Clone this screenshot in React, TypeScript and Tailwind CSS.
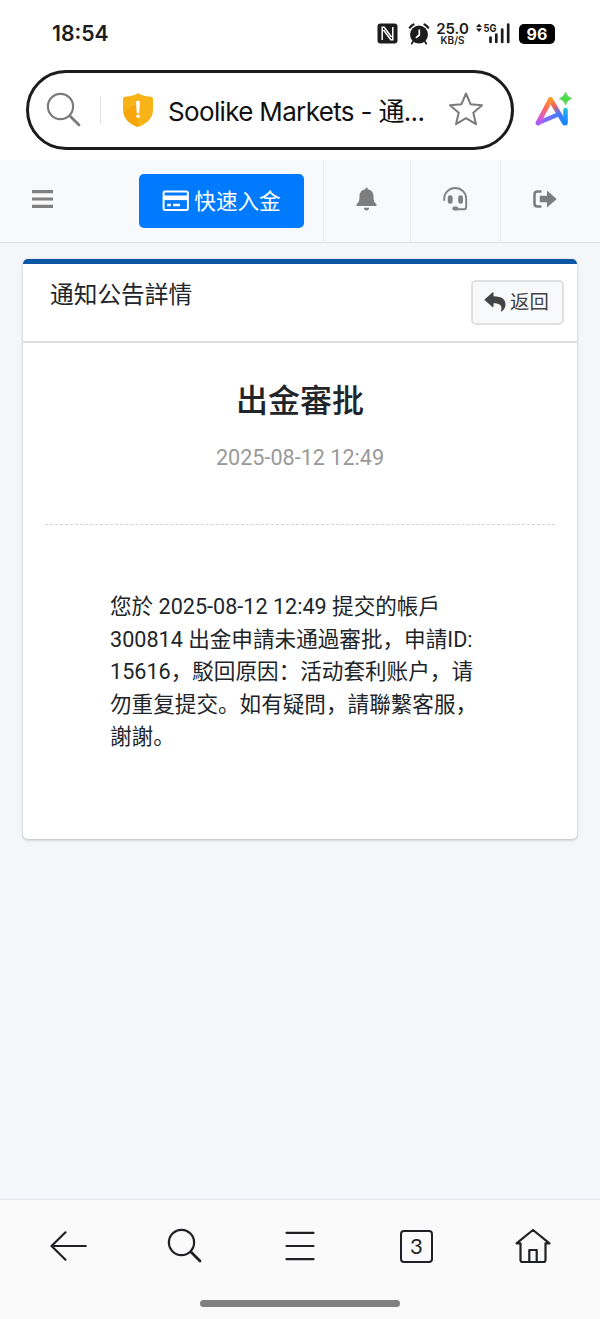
import React from "react";

const ink = "#202124";

const NfcIcon = () => (
  <svg width="21" height="21" viewBox="0 0 21 21">
    <rect x="0.5" y="0.5" width="20" height="20" rx="3" fill="#1c1c1c" />
    <path d="M5.2 17V4.2L7.200 4.200L14.500 14M15.800 4V16.8L13.800 16.800L6.500 7" fill="none" stroke="#fff" strokeWidth="1.5" />
  </svg>
);

const AlarmIcon = () => (
  <svg width="22" height="22" viewBox="0 0 22 22">
    <circle cx="11" cy="11.6" r="9" fill="#1c1c1c" />
    <path d="M1.8 4.600A9 9 0 0 1 5.500 1.4M20.2 4.600A9 9 0 0 0 16.500 1.4" stroke="#1c1c1c" strokeWidth="2.2" strokeLinecap="round" fill="none" />
    <path d="M5 18.5L3.8 20.600M17 18.5l1.2 2.1" stroke="#1c1c1c" strokeWidth="1.8" strokeLinecap="round" />
    <path d="M11.3 7v5L8.4 14.4" stroke="#fff" strokeWidth="1.7" fill="none" strokeLinecap="round" />
  </svg>
);

const SignalIcon = () => (
  <svg width="36" height="24" viewBox="0 0 36 24" className="overflow-visible">
    <path d="M0 4.100L3 0.800L6 4.100zM0 5.600L3 8.900L6 5.600z" fill="#1c1c1c" />
    <text x="7.5" y="8.6" fontSize="10.8" fontWeight="700" fontFamily="Inter, sans-serif" fill="#1c1c1c" textLength="13" lengthAdjust="spacingAndGlyphs">5G</text>
    <path d="M14.5 14.500V19M20.3 11.500V19M26.2 6.5V19M32.2 1.5V19" stroke="#1c1c1c" strokeWidth="2.7" strokeLinecap="round" />
  </svg>
);

const SearchIcon = ({ color, width = 2.2 }: { color: string; width?: number }) => (
  <svg width="36" height="36" viewBox="0 0 36 36" fill="none" stroke={color} strokeLinecap="round">
    <circle cx="14.5" cy="14.5" r="12.6" strokeWidth={width} />
    <path d="M24 24L33 33" strokeWidth={width + 0.6} />
  </svg>
);

const ShieldIcon = () => (
  <svg width="32" height="36" viewBox="0 0 32 36">
    <path d="M16 1C18.5 3.3 24 4.2 29 4.7Q31 5 31 7V17.5C31 27 23.5 32.5 16 35C8.500 32.500 1 27 1 17.500V7Q1 5 3 4.700C8 4.200 13.500 3.300 16 1Z" fill="#f7b318" />
    <path d="M16 13C10 13 5 16 1.500 21C3 28 8.500 32.500 16 35Z" fill="#f5a70d" />
    <path d="M14 10Q14 8.800 16 8.800T18 10L17.300 20.500Q17.200 21.500 16 21.500T14.700 20.500Z" fill="#fff" />
    <circle cx="16" cy="24.3" r="1.8" fill="#fff" />
  </svg>
);

const StarIcon = () => (
  <svg width="34" height="34" viewBox="0 0 34 34">
    <path d="M17 1.500L21.500 12.200L33 13.200L24.300 20.800L27 32.200L17 26.200L7 32.200L9.700 20.800L1 13.200L12.500 12.200Z" fill="none" stroke="#7b7b7b" strokeWidth="2" strokeLinejoin="round" />
  </svg>
);

const AiLogo = () => (
  <svg width="38" height="38" viewBox="0 0 38 38" fill="none">
    <defs>
      <linearGradient id="leg" x1="17" y1="6" x2="3" y2="33" gradientUnits="userSpaceOnUse">
        <stop offset="0" stopColor="#ffa51e" />
        <stop offset="0.4" stopColor="#ff6b5a" />
        <stop offset="0.75" stopColor="#d95bd0" />
        <stop offset="1" stopColor="#a45cff" />
      </linearGradient>
      <linearGradient id="bar" x1="3" y1="33" x2="31" y2="26" gradientUnits="userSpaceOnUse">
        <stop offset="0" stopColor="#b45cfa" />
        <stop offset="0.5" stopColor="#6d70ff" />
        <stop offset="1" stopColor="#168cff" />
      </linearGradient>
      <linearGradient id="side" x1="17" y1="7" x2="31" y2="32" gradientUnits="userSpaceOnUse">
        <stop offset="0" stopColor="#ff9f1f" />
        <stop offset="0.3" stopColor="#f0605d" />
        <stop offset="0.6" stopColor="#4a78ff" />
        <stop offset="1" stopColor="#168cff" />
      </linearGradient>
      <linearGradient id="stem" x1="31" y1="16" x2="31" y2="33" gradientUnits="userSpaceOnUse">
        <stop offset="0" stopColor="#25c9c4" />
        <stop offset="0.5" stopColor="#159fff" />
        <stop offset="1" stopColor="#197fff" />
      </linearGradient>
    </defs>
    <path d="M4 32L24 23.500" stroke="url(#bar)" strokeWidth="4.500" strokeLinecap="round" />
    <path d="M16.500 8.500L30.500 32" stroke="url(#side)" strokeWidth="4.800" strokeLinecap="round" />
    <path d="M16.500 8.500L4 32" stroke="url(#leg)" strokeWidth="4.800" strokeLinecap="round" />
    <path d="M31.500 19V32" stroke="url(#stem)" strokeWidth="4.600" strokeLinecap="round" />
    <path d="M31.500 1Q33 6 37.800 7.500Q33 9 31.500 14Q30 9 25.200 7.500Q30 6 31.500 1Z" fill="#4ed84a" stroke="#4ed84a" strokeWidth="0.500" strokeLinejoin="round" />
  </svg>
);

const BurgerIcon = () => (
  <svg width="21" height="18" viewBox="0 0 21 18">
    <path d="M0 1.600H21M0 9H21M0 16.400H21" stroke="#808080" strokeWidth="3.100" />
  </svg>
);

const CardIcon = () => (
  <svg width="27" height="22" viewBox="0 0 27 22">
    <rect x="1.600" y="1.600" width="24.300" height="18.500" rx="1.500" fill="none" stroke="#fff" strokeWidth="2" />
    <path d="M1.500 7.800H26" stroke="#fff" strokeWidth="4.600" />
    <path d="M5 15H9M11 15H18" stroke="#fff" strokeWidth="2.300" />
  </svg>
);

const BellIcon = () => (
  <svg width="21" height="24" viewBox="0 0 21 24" fill="#7d7d7d">
    <path d="M9.200 2.200Q9.200 0.500 10.500 0.500T11.800 2.200C16 3 17.500 6 17.500 9.500C17.500 14 18.500 15.500 20.300 17Q21.300 19 19.500 19H1.500Q-0.300 19 0.700 17C2.500 15.500 3.500 14 3.500 9.500C3.500 6 5 3 9.200 2.200Z" />
    <path d="M7.700 20.700H13.300Q12.700 23.600 10.500 23.600T7.700 20.700Z" />
  </svg>
);

const HeadsetIcon = () => (
  <svg width="25" height="24" viewBox="0 0 25 24">
    <path d="M1.200 13V11.500A11 10.500 0 0 1 23.200 11.500V20Q23.200 22.300 20.800 22.300H13" fill="none" stroke="#808080" strokeWidth="1.900" strokeLinecap="round" />
    <rect x="4.800" y="8.300" width="4.800" height="8.400" rx="2.300" fill="#808080" />
    <rect x="15.200" y="8.300" width="4.800" height="8.400" rx="2.300" fill="#808080" />
    <rect x="9.300" y="19.500" width="6" height="4" rx="2" fill="#808080" />
  </svg>
);

const ExitIcon = () => (
  <svg width="24" height="18" viewBox="0 0 24 18">
    <path d="M8.500 1.500H4.500Q1.500 1.500 1.500 4.500V13.500Q1.500 16.500 4.500 16.500H8.500" fill="none" stroke="#7d7d7d" strokeWidth="2.600" />
    <path d="M6.800 5.700H14V0.500L23.700 9L14 17.500V12.300H6.800Z" fill="#7d7d7d" />
  </svg>
);

const ReplyIcon = () => (
  <svg width="22" height="20" viewBox="0 0 22 20">
    <path d="M0.300 7.700L8.700 0.300Q9.500 0 9.500 1V4.300C18 4.500 21.500 7.500 21.500 12.500C21.500 15.500 20 18 17.500 19.500Q16.700 19.700 17 18.800C18.500 13 16 11.300 9.500 11.200V14.500Q9.500 15.500 8.700 15.200Z" fill="#444" />
  </svg>
);

const iconCell = "flex items-center justify-center border-l border-[#e9ecef]";

export default function App() {
  return (
    <div className="flex h-[1319px] w-[600px] flex-col overflow-hidden bg-[#f4f6f9] font-['Roboto','Noto_Sans_CJK_SC',sans-serif] text-[#212529]">
      <header className="h-[160px] shrink-0 bg-white">
        <div className="flex h-[70px] items-start pl-[52px] pt-[20px]">
          <span className="w-[325px] font-['Inter',sans-serif] text-[21.2px] font-semibold leading-[26px] text-[#1c1c1c]">18:54</span>
          <div className="flex pt-[3px]">
            <NfcIcon />
            <div className="ml-[10px]"><AlarmIcon /></div>
            <div className="ml-[6px] flex w-[33px] flex-col items-center whitespace-nowrap font-['Inter',sans-serif] font-semibold text-[#1c1c1c]">
              <span className="text-[15px] leading-[11px]">25.0</span>
              <span className="text-[10px] leading-[12px]">KB/S</span>
            </div>
            <div className="ml-[7px]"><SignalIcon /></div>
            <div className="ml-[7px] mt-px flex h-[20px] w-[36px] items-center justify-center rounded-[5px] bg-black font-['Inter',sans-serif] text-[16px] font-bold leading-none text-white">96</div>
          </div>
        </div>
        <div className="flex items-center">
          <div className="ml-[26px] flex h-[80px] w-[488px] items-center rounded-full border-[3px] border-[#1c1c1c] pl-[17px]">
            <SearchIcon color="#7b7b7b" />
            <div className="ml-[18px] h-[27px] w-px bg-[#dedede]" />
            <div className="ml-[21px]"><ShieldIcon /></div>
            <span className="ml-[14px] w-[260px] whitespace-nowrap pt-[3px] font-['Inter','Noto_Sans_CJK_SC',sans-serif] text-[26px] leading-[36px] tracking-[-0.66px] text-[#111]">Soolike Markets - 通...</span>
            <div className="ml-[21px] shrink-0 pb-[3px]"><StarIcon /></div>
          </div>
          <div className="ml-[20px]"><AiLogo /></div>
        </div>
      </header>

      <nav className="flex h-[83px] shrink-0 border-b border-[#dee2e6] bg-[#f8f9fa]">
        <div className="flex w-[139px] items-center pb-[5px] pl-[32px]"><BurgerIcon /></div>
        <button className="mt-[14px] flex h-[54px] w-[165px] items-center justify-center gap-[5px] rounded-[5px] bg-[#007bff] text-[21.6px] text-white">
          <CardIcon />
          <span className="pt-[3px]">快速入金</span>
        </button>
        <div className={`${iconCell} ml-[19px] w-[87px] pb-[5px] pr-[2px]`}><BellIcon /></div>
        <div className={`${iconCell} w-[90px] pb-[5px]`}><HeadsetIcon /></div>
        <div className={`${iconCell} w-[100px] pb-[5px] pr-[12px]`}><ExitIcon /></div>
      </nav>

      <main className="flex-1 px-[23px] pt-[16px]">
        <section className="h-[580px] rounded-[5px] border-t-[5px] border-[#0d56a6] bg-white shadow-[0_1px_3px_rgba(0,0,0,0.25)]">
          <div className="flex h-[79px] items-start justify-between border-b-2 border-[#dfdfdf] pl-[27px] pr-[13px] pt-[16px]">
            <h1 className="pt-px text-[23.7px] leading-[28px]">通知公告詳情</h1>
            <button className="flex h-[45px] w-[93px] items-center justify-center gap-[4px] rounded-[5px] border-2 border-[#e0e0e0] bg-[#f8f9fa] pr-[2px] text-[19.4px] text-[#444]">
              <div className="pb-[2px]"><ReplyIcon /></div>
              <span className="pt-px">返回</span>
            </button>
          </div>
          <div className="mx-[22px] flex h-[182px] flex-col items-center border-b border-dashed border-[#d3d3d3] pt-[36px]">
            <h2 className="text-[32px] font-medium leading-[44px]">出金審批</h2>
            <time className="mt-[19px] text-[21.6px] leading-[32px] text-[#999]">2025-08-12 12:49</time>
          </div>
          <p className="ml-[87px] mt-[66px] whitespace-nowrap text-[21.6px] leading-[32.5px]">
            您於 2025-08-12 12:49 提交的帳戶<br />
            300814 出金申請未通過審批，申請ID:<br />
            15616，駁回原因：活动套利账户，请<br />
            勿重复提交。如有疑問，請聯繫客服，<br />
            謝謝。
          </p>
        </section>
      </main>

      <footer className="flex h-[120px] shrink-0 flex-col border-t border-[#e2e5eb] bg-[#fafafa]">
        <div className="flex h-[92px] items-center pl-[50px]">
          <svg width="37" height="30" viewBox="0 0 37 30" fill="none" stroke={ink} strokeWidth="2.200" strokeLinecap="round" strokeLinejoin="round">
            <path d="M15.500 1.300L1.500 15L15.500 28.700M1.500 15H35.800" />
          </svg>
          <div className="ml-[80px]"><SearchIcon color={ink} /></div>
          <svg className="ml-[81px]" width="32" height="30" viewBox="0 0 32 30" stroke={ink} strokeWidth="2.200" strokeLinecap="round">
            <path d="M2.500 1.800H29.500M2.500 15H29.500M2.500 28.200H29.500" />
          </svg>
          <div className="ml-[84px] flex h-[33px] w-[33px] items-center justify-center rounded-[4px] border-2 border-[#202124] font-['Lato',sans-serif] text-[22px] leading-none text-[#202124]">3</div>
          <svg className="ml-[82px]" width="36" height="36" viewBox="0 0 36 36" fill="none" stroke={ink} strokeWidth="2.200" strokeLinecap="round" strokeLinejoin="round">
            <path d="M5.500 15.300H1.500L18 2L34.500 15.300H30.500V32Q30.500 34 28.500 34H7.500Q5.500 34 5.500 32V15.300M14.300 34V22H21.700V34" />
          </svg>
        </div>
        <div className="mx-auto mt-[8px] h-[7px] w-[200px] rounded-full bg-[#808080]" />
      </footer>
    </div>
  );
}
